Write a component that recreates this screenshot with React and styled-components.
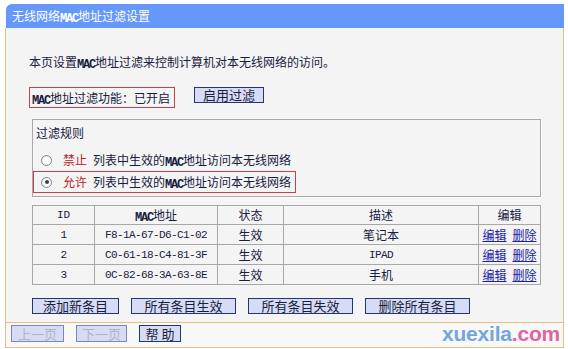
import React from 'react';
import styled, { createGlobalStyle } from 'styled-components';

const GlobalStyle = createGlobalStyle`
  body {
    margin: 0;
    background: #fff;
  }
`;

const fontCjk = `"Noto Sans CJK SC", "Liberation Sans", sans-serif`;
const fontHalf = `"Liberation Mono", "DejaVu Sans Mono", monospace`;
const textColor = `#18203e`;
const tan = `#e3c27e`;
const panelBg = `#f4f4f4`;
const redLine = `#c8404a`;
const btnFill = `#d8dbf6`;
const btnBorder = `#25356e`;

const rows = [
  { id: 1, mac: 'F8-1A-67-D6-C1-02', desc: '笔记本' },
  { id: 2, mac: 'C0-61-18-C4-81-3F', desc: 'IPAD' },
  { id: 3, mac: '0C-82-68-3A-63-8E', desc: '手机' },
];

function App() {
  return (
    <Page>
      <GlobalStyle />
      <Panel>
        <TitleBar>
          无线网络<Half>MAC</Half>地址过滤设置
        </TitleBar>
        <Body>
          <Intro>
            本页设置<Half>MAC</Half>地址过滤来控制计算机对本无线网络的访问。
          </Intro>
          <StatusRow>
            <StatusBox>
              <span>
                <Half>MAC</Half>地址过滤功能：已开启
              </span>
            </StatusBox>
            <Button $w={70}>启用过滤</Button>
          </StatusRow>
          <RuleSet>
            <RuleTitle>过滤规则</RuleTitle>
            <RuleRow>
              <Radio />
              <RuleKey>禁止</RuleKey>
              <span>
                列表中生效的<Half>MAC</Half>地址访问本无线网络
              </span>
            </RuleRow>
            <RuleRow $marked>
              <Radio $checked />
              <RuleKey>允许</RuleKey>
              <span>
                列表中生效的<Half>MAC</Half>地址访问本无线网络
              </span>
            </RuleRow>
          </RuleSet>
          <Table>
            <colgroup>
              <col style={{ width: 62 }} />
              <col style={{ width: 123 }} />
              <col style={{ width: 66 }} />
              <col style={{ width: 195 }} />
              <col style={{ width: 62 }} />
            </colgroup>
            <thead>
              <tr>
                <HeadCell $mono>ID</HeadCell>
                <HeadCell>
                  <Half>MAC</Half>地址
                </HeadCell>
                <HeadCell>状态</HeadCell>
                <HeadCell>描述</HeadCell>
                <HeadCell>编辑</HeadCell>
              </tr>
            </thead>
            <tbody>
              {rows.map((r) => (
                <tr key={r.id}>
                  <Cell $mono>{r.id}</Cell>
                  <Cell $mono>{r.mac}</Cell>
                  <Cell>生效</Cell>
                  <Cell $mono={r.desc === 'IPAD'}>{r.desc}</Cell>
                  <Cell>
                    <LinkText>编辑</LinkText>
                    <LinkText>删除</LinkText>
                  </Cell>
                </tr>
              ))}
            </tbody>
          </Table>
          <ButtonRow>
            <Button $w={87}>添加新条目</Button>
            <Button $w={105}>所有条目生效</Button>
            <Button $w={105}>所有条目失效</Button>
            <Button $w={105}>删除所有条目</Button>
          </ButtonRow>
        </Body>
        <Footer>
          <Button $w={53} $h={17} disabled>
            上一页
          </Button>
          <Button $w={51} $h={17} disabled>
            下一页
          </Button>
          <Button $w={42} $h={17}>
            帮 助
          </Button>
        </Footer>
      </Panel>
      <Watermark>
        xuexila<Dot>.com</Dot>
      </Watermark>
    </Page>
  );
}

const Page = styled.div`
  position: relative;
  width: 568px;
  height: 349px;
  box-sizing: border-box;
  padding: 4px 0 0 5px;
  overflow: hidden;
  font-family: ${fontCjk};
  font-size: 12px;
  color: ${textColor};
`;

// half-width latin, like the bitmap font of the router page
const Half = styled.span`
  font-family: ${fontHalf};
  font-size: 12px;
  font-weight: bold;
  letter-spacing: -1.2px;
  line-height: 0;
  vertical-align: -1px;
`;

const Panel = styled.div`
  width: 559px;
`;

const TitleBar = styled.div`
  height: 24px;
  margin-left: 1px;
  padding-left: 6px;
  background: #6697fb;
  border-top-left-radius: 6px;
  color: #fff;
  font-size: 12px;
  line-height: 23px;
`;

const Body = styled.div`
  border-left: 1px solid ${tan};
  border-right: 1px solid ${tan};
  background: ${panelBg};
  padding: 26px 0 8px 23px;
`;

const Intro = styled.div`
  line-height: 16px;
  height: 16px;
`;

const StatusRow = styled.div`
  display: flex;
  align-items: flex-start;
  margin-top: 17px;
`;

const StatusBox = styled.div`
  display: flex;
  align-items: center;
  height: 21px;
  box-sizing: border-box;
  padding: 0 4px 0 2px;
  border: 1px solid ${redLine};
  line-height: 16px;
  margin-right: 19px;
`;

const Button = styled.button`
  width: ${(p) => p.$w}px;
  height: ${(p) => p.$h || 16}px;
  box-sizing: border-box;
  padding: 0;
  border: 1px solid ${(p) => (p.disabled ? '#7b86bd' : btnBorder)};
  background: ${btnFill};
  color: ${(p) => (p.disabled ? '#b0b3cc' : '#1a1f3a')};
  font-family: ${fontCjk};
  font-size: 13px;
  line-height: 14px;
  border-radius: 0;
`;

const RuleSet = styled.div`
  width: 509px;
  height: 78px;
  box-sizing: border-box;
  margin: 11px 0 0 3px;
  padding: 5px 0 0 0;
  border: 1px solid #a9a9a9;
  box-shadow: 1px 1px 0 #fff;
`;

const RuleTitle = styled.div`
  padding-left: 3px;
  line-height: 16px;
  height: 16px;
  margin-bottom: 8px;
`;

const RuleRow = styled.div`
  display: flex;
  align-items: center;
  width: fit-content;
  height: 22px;
  box-sizing: border-box;
  padding: 0 4px 0 7px;
  border: 1px solid ${(p) => (p.$marked ? redLine : 'transparent')};
  line-height: 16px;
  white-space: nowrap;
`;

const Radio = styled.span`
  position: relative;
  width: 11px;
  height: 11px;
  box-sizing: border-box;
  border-radius: 50%;
  border: 1px solid #7d8694;
  background: radial-gradient(circle at 60% 60%, #fff 40%, #e4e6ea 100%);
  margin-right: 11px;
  &::after {
    content: '';
    display: ${(p) => (p.$checked ? 'block' : 'none')};
    position: absolute;
    left: 2.5px;
    top: 2.5px;
    width: 4px;
    height: 4px;
    border-radius: 50%;
    background: #3a3f4c;
  }
`;

const RuleKey = styled.span`
  color: #c0202a;
  margin-right: 6px;
`;

const Table = styled.table`
  margin: 8px 0 0 3px;
  width: 508px;
  border-collapse: collapse;
  table-layout: fixed;
  border: 1px solid #a2a2a2;
`;

const HeadCell = styled.th`
  height: 18px;
  padding: 0;
  border: 1px solid #a8a8a8;
  font-weight: normal;
  text-align: center;
  line-height: 16px;
  font-family: ${(p) => (p.$mono ? fontHalf : fontCjk)};
  font-size: ${(p) => (p.$mono ? '11px' : '12px')};
`;

const Cell = styled.td`
  height: 19px;
  padding: 0;
  border: 1px solid #a8a8a8;
  text-align: center;
  line-height: 16px;
  font-family: ${(p) => (p.$mono ? fontHalf : fontCjk)};
  font-size: ${(p) => (p.$mono ? '11px' : '12px')};
  letter-spacing: ${(p) => (p.$mono ? '-0.6px' : '0')};
`;

const LinkText = styled.a`
  color: #1a22a8;
  text-decoration: underline;
  margin: 0 3px;
  cursor: pointer;
`;

const ButtonRow = styled.div`
  display: flex;
  gap: 12px;
  height: 16px;
  margin: 13px 0 0 3px;
`;

const Footer = styled.div`
  display: flex;
  align-items: flex-start;
  gap: 12px;
  height: 26px;
  box-sizing: border-box;
  padding: 2px 0 0 5px;
  border: 1px solid ${tan};
  background: #f8f8f8;
`;

const Watermark = styled.div`
  position: absolute;
  right: 8px;
  top: 322px;
  font-family: "Liberation Sans", Arial, sans-serif;
  font-weight: bold;
  font-size: 21px;
  line-height: 24px;
  color: #74a6d8;
  letter-spacing: -0.2px;
`;

const Dot = styled.span`
  color: #e2649e;
`;

export default App;
